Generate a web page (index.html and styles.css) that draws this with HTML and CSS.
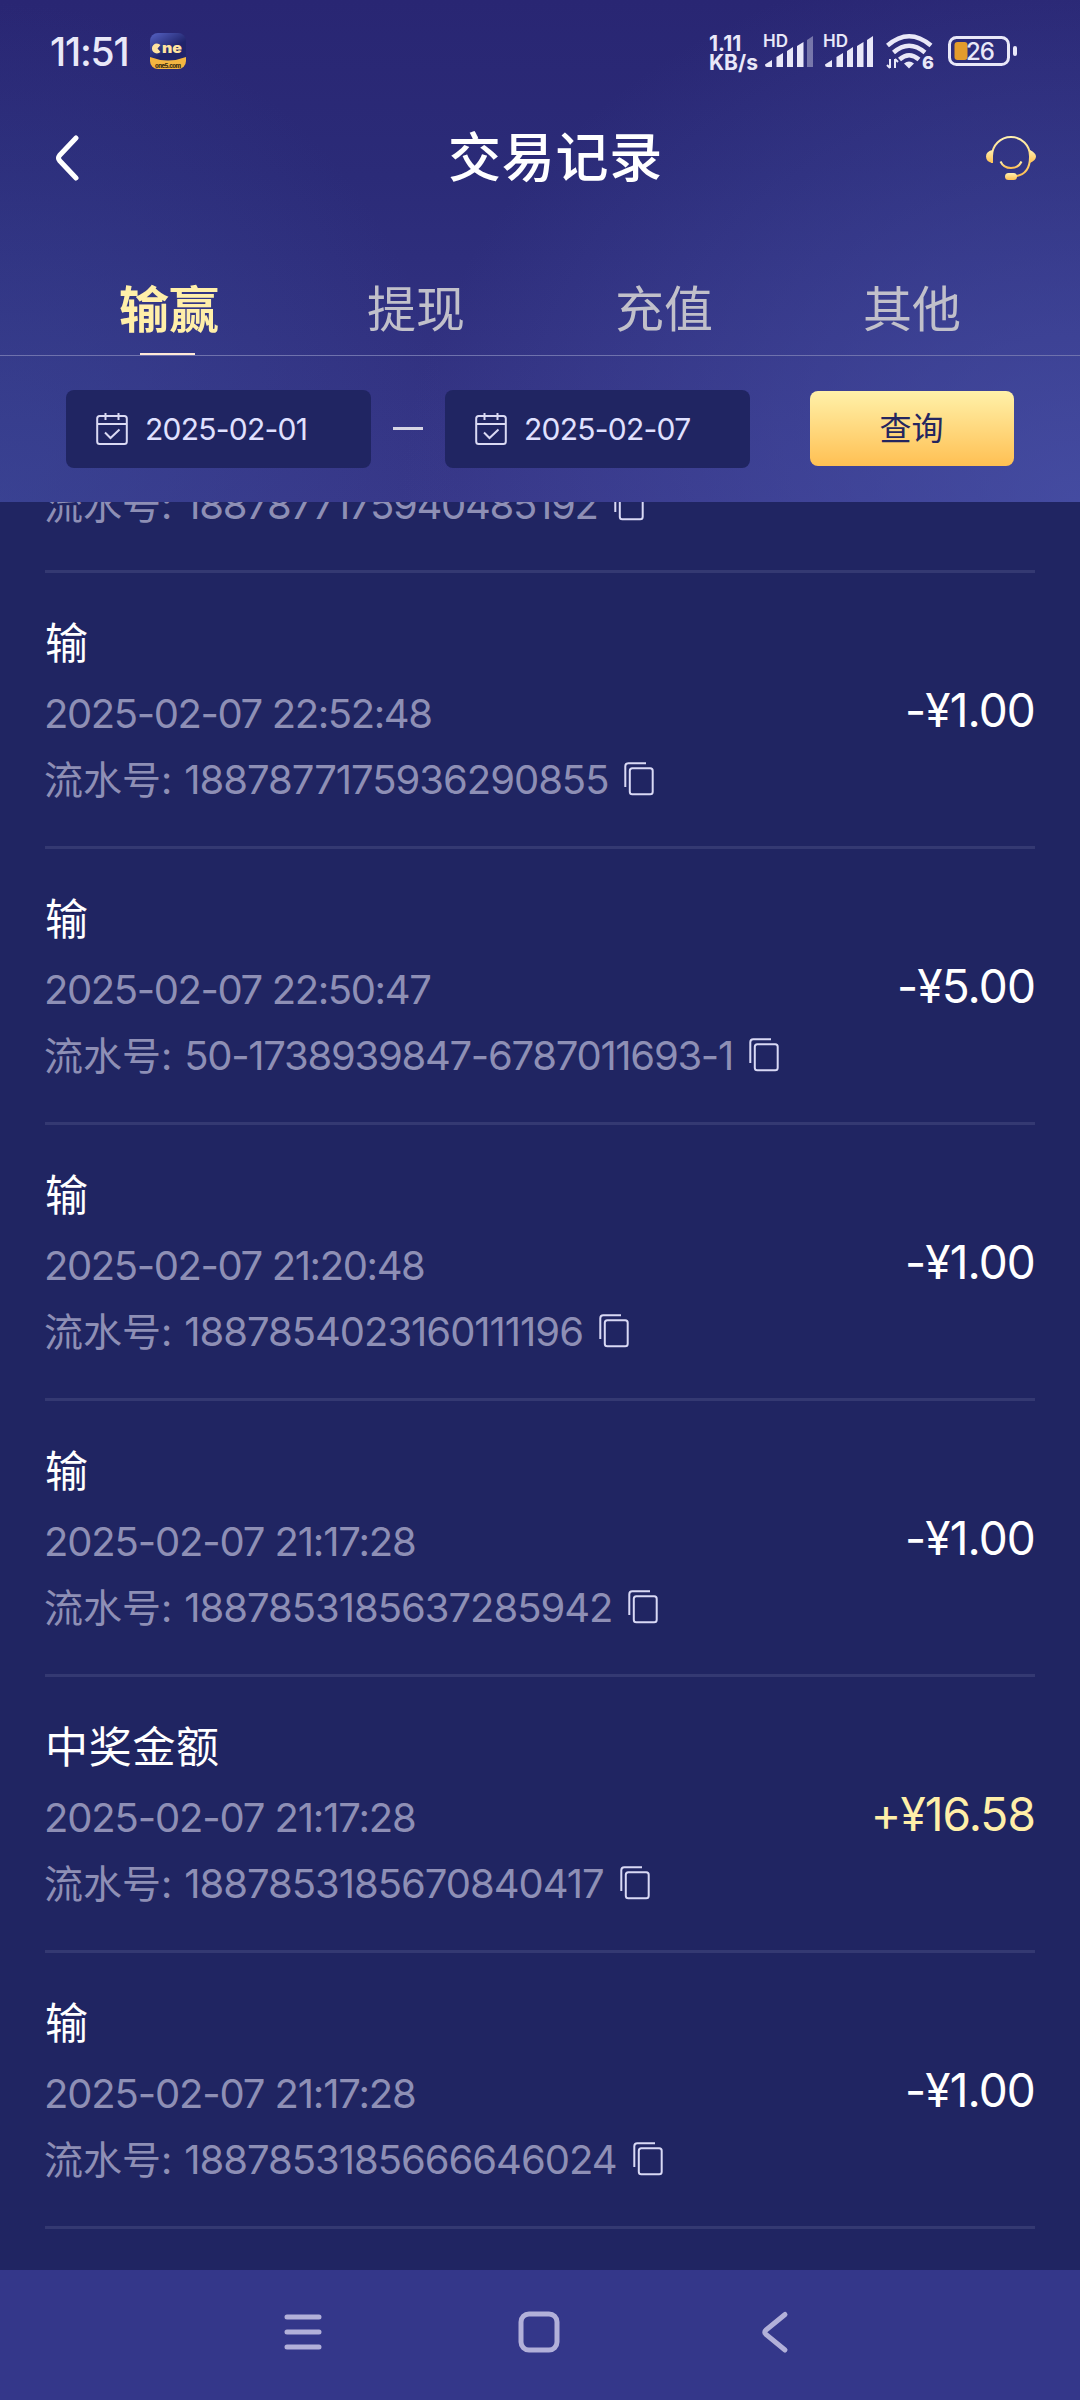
FILE: index.html
```html
<!DOCTYPE html>
<html lang="zh-CN">
<head>
<meta charset="utf-8">
<title>交易记录</title>
<link rel="stylesheet" href="styles.css">
</head>
<body>
<svg class="defs" aria-hidden="true">
  <defs>
    <linearGradient id="gold" x1="0" y1="0" x2="0" y2="1"><stop offset="0" stop-color="#fff0b0"/><stop offset="1" stop-color="#ffc052"/></linearGradient>
    <symbol id="copy" viewBox="0 0 30 34"><path d="M1.300 25V4.300q0-3 3-3H22" /><rect x="5.800" y="6.300" width="22.900" height="26" rx="2.500"/></symbol>
    <symbol id="cal" viewBox="0 0 32 34"><rect x="1.200" y="4" width="29.600" height="28" rx="2.500"/><path d="M1.200 12H30.800M9.500 1V8M22.500 1V8M9 20.500L14.500 26L23.500 17.500"/></symbol>
    <symbol id="bars" viewBox="0 0 50 32"><path d="M0 28.500L7 24V31H2Q0 31 0 29ZM11.500 21L18 17V31H11.500ZM22 15L28 11V31H22ZM32 10L38.500 6V31H32Z"/></symbol>
  </defs>
</svg>
<div class="screen">
  <header class="top">
    <div class="status">
      <span class="time">11:51</span>
      <svg class="app" viewBox="0 0 36 36"><defs><linearGradient id="appbg" x1="0" y1="0" x2=".6" y2="1"><stop offset="0" stop-color="#5662c4"/><stop offset=".6" stop-color="#20246b"/></linearGradient><clipPath id="appclip"><rect width="36" height="36" rx="8"/></clipPath></defs><g clip-path="url(#appclip)"><rect width="36" height="36" fill="url(#appbg)"/><path d="M0 24Q18 31 36 24V36H0Z" fill="#f4b541"/><path d="M10.500 12A5 5 0 1 0 10.500 19L7.500 15.500Z" fill="#ffe3a0"/><text x="12" y="20" class="app-name" textLength="20" lengthAdjust="spacingAndGlyphs">ne</text><text x="5" y="34.500" class="app-url" textLength="26">one5.com</text></g></svg>
      <span class="speed"><span>1.11</span><span>KB/s</span></span>
      <span class="signal"><b>HD</b><svg viewBox="0 0 50 32"><use href="#bars" width="50" height="32"/><path d="M42 4L48 0V31H42Z" opacity=".4"/></svg></span>
      <span class="signal second"><b>HD</b><svg viewBox="0 0 50 32"><use href="#bars" width="50" height="32"/><path d="M42 4L48 0V31H42Z"/></svg></span>
      <svg class="wifi" viewBox="0 0 48 36"><g fill="none" stroke="#e9e8f8" stroke-width="4.500"><path d="M1.500 11.500Q23 -7 45 11.500"/><path d="M7.500 18.500Q23 5 39 18.500"/><path d="M13.500 25.500Q23 17 33 25.500"/></g><path d="M18 29.500Q23 25.500 28 29.500L23 34.500Z"/><path d="M4 25V34M9 34V25M1 31L4 34M12 28L9 25" fill="none" stroke="#e9e8f8" stroke-width="2"/><text x="36" y="35" class="wifi-n">6</text></svg>
      <svg class="battery" viewBox="0 0 70 30"><rect x="1.500" y="1.500" width="59" height="27" rx="7" fill="none" stroke="#e9e8f8" stroke-width="3"/><rect x="6.500" y="6" width="13" height="18" rx="3" fill="#e39c2c"/><rect x="65" y="10" width="4" height="10" rx="2"/><text x="18" y="24" class="battery-n">26</text></svg>
    </div>
    <div class="titlebar">
      <svg class="back" viewBox="0 0 24 46"><path d="M21 3L4.500 20.500Q2.500 23 4.500 25.500L21 43"/></svg>
      <h1>交易记录</h1>
      <svg class="service" viewBox="0 0 50 44"><g fill="none" stroke="url(#gold)" stroke-width="2"><path d="M6 27V20A19 19 0 0 1 44 20Q44.500 39 28 40.500"/><path d="M14.500 25.500Q17.500 32 25 32T35.500 25.500"/></g><g fill="url(#gold)"><path d="M7 14V27Q0 26 0 20.500T7 14ZM44 14V27Q50 24 50 20.500T44 14Z"/><rect x="19" y="37" width="12" height="7" rx="3.500"/></g></svg>
    </div>
    <nav class="tabs"><a class="on">输赢</a><a>提现</a><a>充值</a><a>其他</a></nav>
    <div class="filters">
      <div class="date"><svg><use href="#cal"/></svg><span>2025-02-01</span></div>
      <i class="dash"></i>
      <div class="date"><svg><use href="#cal"/></svg><span>2025-02-07</span></div>
      <button>查询</button>
    </div>
  </header>
  <main class="list">
    <article class="row cut"><div><p class="serial"><span class="label">流水号:</span><span class="num tight">1887877175940485192</span><svg><use href="#copy"/></svg></p></div></article>
    <article class="row"><div><h2>输</h2><p class="when">2025-02-07 22:52:48</p><p class="serial"><span class="label">流水号:</span><span class="num">1887877175936290855</span><svg><use href="#copy"/></svg></p></div><strong>-¥1.00</strong></article>
    <article class="row"><div><h2>输</h2><p class="when">2025-02-07 22:50:47</p><p class="serial"><span class="label">流水号:</span><span class="num tight">50-1738939847-6787011693-1</span><svg><use href="#copy"/></svg></p></div><strong>-¥5.00</strong></article>
    <article class="row"><div><h2>输</h2><p class="when">2025-02-07 21:20:48</p><p class="serial"><span class="label">流水号:</span><span class="num">1887854023160111196</span><svg><use href="#copy"/></svg></p></div><strong>-¥1.00</strong></article>
    <article class="row"><div><h2>输</h2><p class="when loose">2025-02-07 21:17:28</p><p class="serial"><span class="label">流水号:</span><span class="num">1887853185637285942</span><svg><use href="#copy"/></svg></p></div><strong>-¥1.00</strong></article>
    <article class="row"><div><h2>中奖金额</h2><p class="when loose">2025-02-07 21:17:28</p><p class="serial"><span class="label">流水号:</span><span class="num">1887853185670840417</span><svg><use href="#copy"/></svg></p></div><strong class="win">+¥16.58</strong></article>
    <article class="row"><div><h2>输</h2><p class="when loose">2025-02-07 21:17:28</p><p class="serial"><span class="label">流水号:</span><span class="num">1887853185666646024</span><svg><use href="#copy"/></svg></p></div><strong>-¥1.00</strong></article>
  </main>
  <footer class="sysnav">
    <svg viewBox="0 0 40 44"><path d="M4 7H36M4 22H36M4 37H36"/></svg>
    <svg viewBox="0 0 44 44"><rect x="4" y="4" width="36" height="36" rx="8"/></svg>
    <svg viewBox="0 0 40 44"><path d="M30 4.500L11 20Q8.500 22 11 24.500L30 40"/></svg>
  </footer>
</div>
</body>
</html>
```
FILE: styles.css
```css
* { box-sizing: border-box; margin: 0; padding: 0; }
body { width: 1080px; background: #202562; font-family: Inter, "Noto Sans CJK SC", sans-serif; color: #fff; }
.defs { position: absolute; width: 0; height: 0; }
.screen { width: 1080px; height: 2400px; display: flex; flex-direction: column; overflow: hidden; }

.top {
  height: 502px; flex: none; display: flex; flex-direction: column;
  background:
    radial-gradient(ellipse 680px 560px at 1080px 502px, rgba(75, 86, 174, .65), transparent),
    radial-gradient(ellipse 460px 500px at 0 502px, rgba(60, 76, 156, .5), transparent),
    linear-gradient(180deg, #292673, #2b2b78 35%, #373788);
}

.status { height: 102px; display: flex; align-items: flex-start; padding-left: 50px; color: #e9e8f8; fill: #e9e8f8; }
.time { width: 100px; margin-top: 27px; font-size: 39px; line-height: 50px; font-weight: 500; letter-spacing: -1.2px; }
.app { width: 36px; height: 36px; margin-top: 33px; }
.app-name { font: 900 14px Inter, sans-serif; fill: #ffe3a0; }
.app-url { font: 800 6px Inter, sans-serif; fill: #3a2a10; }
.speed { margin: 34px 0 0 523px; width: 56px; display: flex; flex-direction: column; font-size: 21px; line-height: 19px; font-weight: 700; }
.signal { width: 50px; height: 34px; margin-top: 33px; display: grid; }
.signal b { grid-area: 1 / 1; font-size: 17px; line-height: 17px; font-weight: 600; margin-left: -2px; }
.signal svg { grid-area: 1 / 1; width: 50px; height: 32px; margin-top: 3px; }
.signal.second { margin-left: 10px; }
.wifi { width: 48px; height: 36px; margin: 34px 0 0 11px; overflow: visible; }
.wifi-n { font: 800 18px Inter, sans-serif; }
.battery { width: 70px; height: 30px; margin: 36px 0 0 14px; }
.battery-n { font: 500 24px Inter, sans-serif; letter-spacing: -1px; }

.titlebar { height: 112px; display: flex; align-items: center; justify-content: space-between; padding: 0 44px 0 55px; }
.back { width: 24px; height: 46px; fill: none; stroke: #fff; stroke-width: 5; stroke-linecap: round; }
h1 { font-size: 53px; line-height: 80px; font-weight: 500; margin-left: 46px; letter-spacing: .7px; }
.service { width: 50px; height: 44px; }

.tabs { height: 142px; display: grid; grid-template-columns: repeat(4, 248px); justify-content: center; padding-top: 40px; border-bottom: 1px solid #6f72ad; }
.tabs a { display: flex; flex-direction: column; align-items: center; height: 101px; font-size: 49px; line-height: 112px; color: #c1c0ca; }
.tabs .on { color: #ffefa9; font-weight: 700; font-size: 50px; padding-left: 2px; }
.tabs .on::after { content: ""; width: 55px; height: 2px; background: #ffe9d8; margin-top: -13px; margin-right: 3px; }

.filters { flex: 1; display: flex; align-items: flex-start; padding: 34px 66px 0; }
.date { width: 305px; height: 78px; border-radius: 8px; background: #202562; display: flex; align-items: center; padding-left: 30px; gap: 17px; font-size: 30px; color: #e0e1ff; letter-spacing: -.75px; }
.date svg { width: 32px; height: 34px; fill: none; stroke: #dadaf4; stroke-width: 2; }
.dash { width: 30px; height: 3px; margin: 37px 22px 0; background: #d6d5e4; }
button { width: 204px; height: 75px; margin: 1px 0 0 60px; padding: 0 1px 5px 0; border: 0; border-radius: 8px; background: linear-gradient(#fff1a9, #ffc053); color: #25265f; font: 400 32px "Noto Sans CJK SC", sans-serif; }

.list { height: 1768px; flex: none; overflow: hidden; padding: 0 45px; }
.row { height: 276px; display: flex; justify-content: space-between; border-bottom: 3px solid #343972; padding-top: 38px; }
.cut { height: 71px; padding: 0; }
.cut .serial { margin-top: -31px; }
h2 { font-size: 43px; line-height: 64px; height: 64px; font-weight: 400; letter-spacing: .7px; }
.when { height: 66px; font-size: 40px; line-height: 66px; color: #8e8fb5; margin: 6px 0 0 -1px; letter-spacing: -1.4px; }
.loose { letter-spacing: -1.15px; }
.serial { display: flex; align-items: center; height: 66px; margin: -1px 0 0 -1px; font-size: 39px; color: #8e8fb5; }
.label { padding-bottom: 4px; }
.num { margin-left: 12px; font-size: 40px; letter-spacing: -1.02px; }
.tight { letter-spacing: -1.28px; }
.serial svg { width: 30px; height: 34px; margin-left: 16px; fill: none; stroke: #d9d9f5; stroke-width: 2; }
strong { font-size: 46px; line-height: 56px; font-weight: 400; margin-top: 71px; letter-spacing: -.9px; }
.win { color: #ffefa9; }

.sysnav { height: 130px; background: #34378a; display: grid; grid-template-columns: repeat(3, 236px); justify-content: center; align-items: center; padding: 0 2px 6px 0; fill: none; stroke: #b2b0d9; stroke-width: 5; stroke-linecap: round; }
.sysnav svg { height: 44px; justify-self: center; width: 44px; }
```
